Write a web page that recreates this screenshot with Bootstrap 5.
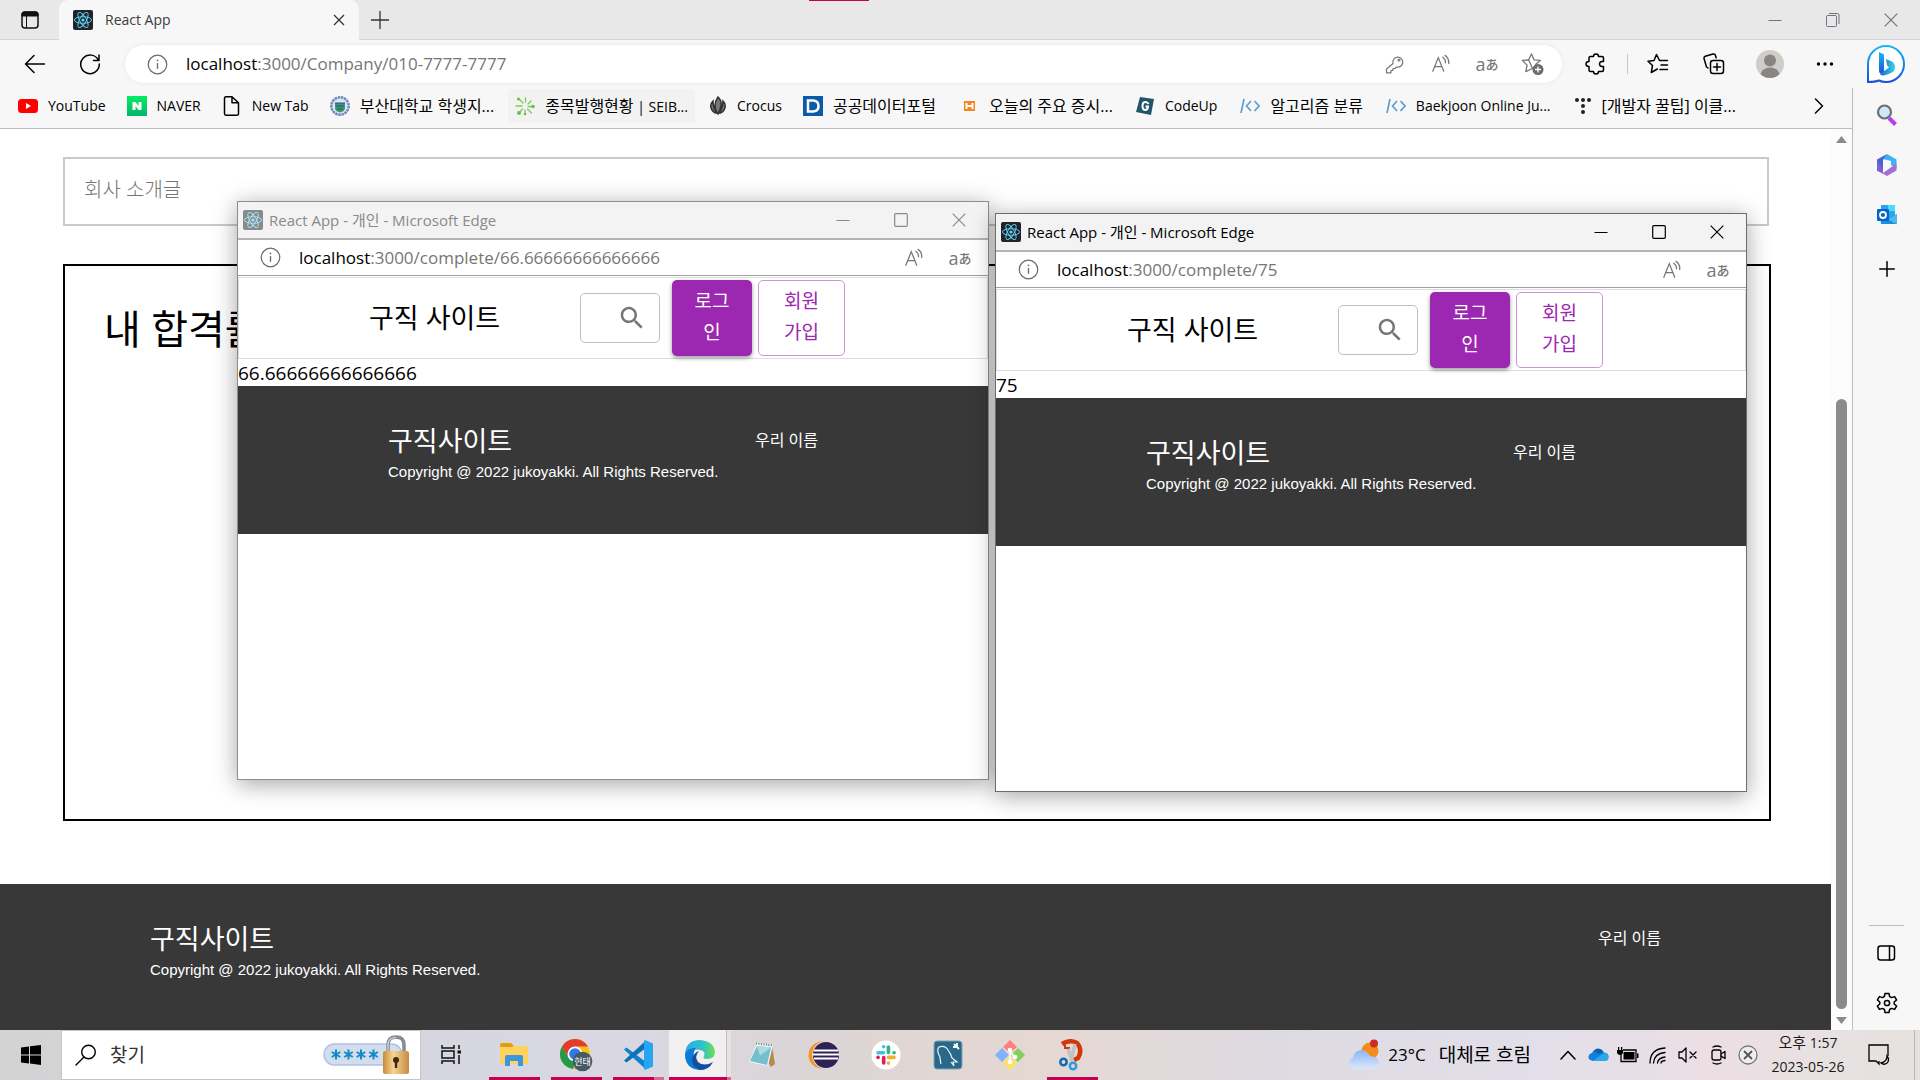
<!DOCTYPE html>
<html lang="ko">
<head>
<meta charset="utf-8">
<meta name="viewport" content="width=device-width, initial-scale=1">
<title>React App</title>
<link href="https://cdn.jsdelivr.net/npm/bootstrap@5.3.0/dist/css/bootstrap.min.css" rel="stylesheet">
<style>
:root{--ui:"Open Sans","Noto Sans CJK KR",sans-serif;--accent:#c4004f}
html,body{height:100%}
body{font-family:var(--ui);font-size:14px;line-height:20px;color:#000;overflow:hidden;background:#fff}
svg{display:block;flex:none}
button{background:none;border:0;padding:0;color:inherit}
a{color:inherit;text-decoration:none}
.line{fill:none;stroke:currentColor;stroke-width:1.5;stroke-linecap:round;stroke-linejoin:round}
.center-box{display:flex;align-items:center;justify-content:center;flex:none}
/* tab strip */
.tabstrip{height:40px;background:#e8e8e8;border-bottom:1px solid #d4d4d4}
.tabstrip .tab-menu{width:59px}
.browser-tab{width:300px;height:40px;background:#f7f7f7;border-radius:9px 9px 0 0;padding:0 12px 0 14px;margin-bottom:-1px;color:#3c3c3c}
.new-tab{width:42px}
.pink-mark{top:0;left:809px;width:60px;height:1px;background:var(--accent)}
.win-btn{width:58px;height:100%}
/* tool bar */
.toolbar{height:48px;background:#f7f7f7;padding-left:7px}
.tool{width:55px;height:38px}
.tool-end{width:56px;height:38px}
.tool-end:last-child{width:54px}
.address{height:38px;border-radius:19px;background:#fff;box-shadow:0 0 4px #e6e6e6;margin:0 6px 0 8px;padding:0 6px 0 22px;color:#767676}
.pill-btn{width:46px;height:38px}
.lang{font-size:18px;line-height:20px}
.lang i{font:500 13px/20px "Noto Sans CJK JP",sans-serif}
.url{font-size:17px;line-height:24px;color:#767676;margin-left:18px}
.url b{font-weight:400;color:#000}
.v-rule{width:1px;height:20px;background:#c8c8c8;margin:0 2px 0 3px}
.bookmarks{height:41px;background:#f7f7f7;border-bottom:1px solid #bdbdbd;padding:0 0 4px 11px}
.bookmark{height:34px;padding:0 7px;gap:10px;margin-right:7px;border-radius:3px;white-space:nowrap}
.bookmark:nth-child(n+7){margin-right:9px}
.bookmark.hovered{background:#f2f2f2}
.ko{font-size:16px}
.more-marks{width:66px}
/* side bar */
.side{width:68px;background:#f7f7f7}
.side-body{border-left:1px solid #bdbdbd;padding:2px 0}
.side-btn{width:66px;height:50px}
.side-rule{width:35px;height:1px;background:#bdbdbd;margin-bottom:2px}
/* scroll bar */
.scroller{width:21px;background:#fcfcfc;padding:6px 0 5px}
.thumb{width:11px;background:#8b8b8b;border-radius:6px}
/* page */
.page{padding-top:28px}
.intro{height:69px;margin:0 62px 38px 63px;border:2px solid #c9c9c9;padding:0 19px 4px;font-size:20px;font-weight:300;outline:0}
.intro::placeholder{color:#757575;opacity:1}
.chart-box{margin:0 60px 63px 63px;border:2px solid #000;padding:37px 39px}
.chart-box h1{font-size:40px;line-height:52px;font-weight:400}
.site-foot{height:148px;flex:none;background:#383838;color:#fff;padding:38px 170px 0 150px}
.page .site-foot{height:146px}
.site-foot h2{font-size:27px;line-height:34px;font-weight:400;margin:0}
.site-foot p{font:15px/28px "Liberation Sans",Arial,sans-serif;margin:0}
.site-foot span{font-size:16px;line-height:32px}
/* popup windows */
.popup{position:absolute;width:752px;height:579px;background:#fff;border:1px solid #6d6d6d;box-shadow:0 4px 22px rgba(0,0,0,.36)}
.popup.first{left:237px;top:201px;border-color:#8d8d8d}
.popup.second{left:995px;top:213px}
.p-title{height:38px;background:#f3f3f3;border-bottom:2px solid #b4b4b4;padding-left:5px;font-size:15px}
.p-title span{margin-left:6px}
.first .p-title{color:#8a8a8a}
.first .p-title .fav{opacity:.5}
.p-url{height:36px;border-bottom:1px solid #a0a0a0;padding:0 5px 0 22px;color:#767676}
.site-head{height:82px;margin-top:1px;border:1px solid #ddd;padding:0 142px 0 130px}
.site-head h2{font-size:27px;line-height:34px;font-weight:400;margin:0}
.find{width:80px;height:50px;border:1px solid #c0c0c0;border-radius:5px;padding-right:12px}
.find input{border:0;outline:0;background:none;width:30px;flex:1;min-width:0}
.mui{height:76px;border-radius:5px;font-size:19px;line-height:31px;padding:0 21px 3px}
.mui.solid{width:80px;background:#9c27b0;color:#fff;box-shadow:0 2px 4px rgba(0,0,0,.4);margin:0 6px 0 12px}
.mui.lined{width:87px;border:1px solid #cd93d7;color:#9c27b0;padding:0 23px 3px}
.result{font-size:19px;line-height:29px;height:27px}
/* task bar */
.taskbar{height:50px;background:linear-gradient(90deg,#d3d3d4 0,#d5d6df 22%,#d9d8e2 32%,#dbd5d6 42%,#e5d8d2 54%,#dedae1 66%,#e2dfea 80%,#ecdfe3 90%,#e4e2df 100%)}
.start{width:61px}
.search-box{width:360px;background:#fff;border:1px solid #c5c5c5;padding:0 10px 0 13px}
.search-box input{border:0;outline:0;flex:1;min-width:0;font-size:19px;margin-left:11px}
.search-box input::placeholder{color:#333;opacity:1}
.task{width:62px;height:50px;position:relative}
.task.run::after{content:"";position:absolute;left:6px;right:5px;bottom:0;height:3px;background:var(--accent)}
.task.many::after{background:linear-gradient(90deg,var(--accent) 80%,#dd6597 80%)}
.task.now{background:linear-gradient(90deg,transparent 0,#f1eff0 0 57px,#c0bebe 57px 58px,#e6e2e1 58px)}
.task.now::after{left:0;right:0;background:linear-gradient(90deg,var(--accent) 93%,#dd6597 93%)}
.tray{width:30px;height:50px}
.tray-set{margin-left:22px}
.weather{font-size:17px}
.weather .ko{font-size:19px;margin-left:13px}
.clock{width:90px;line-height:24px;text-align:center;color:#1a1a1a}
.clock .ko{font-size:15px}
.notice{width:52px}
.show-desk{width:6px;margin-left:9px;border-left:1px solid #b5b5b5}
</style>
<script src="https://cdn.jsdelivr.net/npm/bootstrap@5.3.0/dist/js/bootstrap.bundle.min.js"></script>
</head>
<body class="d-flex flex-column">
<svg width="0" height="0" class="position-absolute" aria-hidden="true">
 <symbol id="react" viewBox="0 0 20 20"><rect width="20" height="20" rx="2" fill="#20232a"/><g fill="none" stroke="#61dafb" stroke-width=".9"><ellipse cx="10" cy="10" rx="8.6" ry="3.3"/><ellipse cx="10" cy="10" rx="8.6" ry="3.3" transform="rotate(60 10 10)"/><ellipse cx="10" cy="10" rx="8.6" ry="3.3" transform="rotate(120 10 10)"/></g><circle cx="10" cy="10" r="1.6" fill="#61dafb"/></symbol>
 <symbol id="info" viewBox="0 0 22 22"><circle cx="11" cy="11" r="9.7" fill="none" stroke="#6b6b6b" stroke-width="1.3"/><path d="M11 9.5v6" stroke="#6b6b6b" stroke-width="1.4"/><circle cx="11" cy="6.7" r=".9" fill="#6b6b6b"/></symbol>
 <symbol id="read" viewBox="0 0 22 22"><g fill="none" stroke="currentColor" stroke-width="1.4" stroke-linecap="round"><path d="M2 19 8 4l6 15M4.200 14h7.600M13 3.500q3 2 3 6M15.500 1.500q4.500 3 4 9"/></g></symbol>
 <symbol id="min" viewBox="0 0 14 14"><path d="M.5 7.500h13" stroke="currentColor"/></symbol>
 <symbol id="max" viewBox="0 0 14 14"><rect x=".7" y=".7" width="12.600" height="12.600" rx="1" fill="none" stroke="currentColor" stroke-width="1.200"/></symbol>
 <symbol id="shut" viewBox="0 0 14 14"><path d="m.7.7 12.600 12.600M13.300.7.7 13.300" stroke="currentColor" stroke-width="1.200"/></symbol>
 <symbol id="find" viewBox="0 0 24 24"><path fill="#757575" d="M15.500 14h-.79l-.28-.27C15.410 12.590 16 11.110 16 9.500 16 5.910 13.090 3 9.500 3S3 5.910 3 9.500 5.910 16 9.500 16c1.610 0 3.090-.59 4.230-1.570l.27.28v.79l5 4.990L20.490 19l-4.990-5zm-6 0C7.010 14 5 11.990 5 9.500S7.010 5 9.500 5 14 7.010 14 9.500 11.990 14 9.500 14z"/></symbol>
 <symbol id="code" viewBox="0 0 20 16"><g fill="none" stroke="#5a9fd4" stroke-width="1.700"><path d="M4 1 1 15M11 3 6.500 8l4.500 5M14.500 3 19 8l-4.500 5"/></g></symbol>
</svg>

<header class="tabstrip d-flex flex-shrink-0">
 <button class="tab-menu center-box" aria-label="탭 작업 메뉴"><svg width="20" height="20"><rect x="2" y="2" width="16" height="16" rx="3" fill="none" stroke="#111" stroke-width="1.500"/><path d="M2 6V4q0-2 2-2h12q2 0 2 2v2z" fill="#111" stroke="#111"/><path d="M6.500 6v12" stroke="#111"/></svg></button>
 <div class="browser-tab d-flex align-items-center"><svg width="20" height="20"><use href="#react"/></svg><span class="ms-2 ps-1 flex-fill">React App</span><button class="center-box" aria-label="탭 닫기"><svg width="16" height="16" stroke="#333" stroke-width="1.300"><path d="m3 3 10 10M13 3 3 13"/></svg></button></div>
 <button class="new-tab center-box" aria-label="새 탭"><svg width="18" height="18" stroke="#333" stroke-width="1.300"><path d="M9 0v18M0 9h18"/></svg></button>
 <div class="ms-auto d-flex text-secondary">
  <button class="win-btn center-box" aria-label="최소화"><svg width="14" height="14"><use href="#min"/></svg></button>
  <button class="win-btn center-box" aria-label="이전 크기로"><svg width="14" height="14" fill="none" stroke="currentColor"><rect x=".5" y="2.500" width="10" height="11" rx="1"/><path d="M3 .5h8.500q1.500 0 1.500 1.500v9"/></svg></button>
  <button class="win-btn center-box" aria-label="닫기"><svg width="14" height="14"><use href="#shut"/></svg></button>
 </div>
 <div class="pink-mark position-absolute"></div>
</header>

<div class="d-flex flex-fill overflow-hidden">
 <div class="d-flex flex-column flex-fill overflow-hidden">
  <nav class="toolbar d-flex align-items-center flex-shrink-0">
   <button class="tool center-box" aria-label="뒤로"><svg class="line" width="22" height="22"><path d="M20.500 11h-19M10 2.500 1.500 11l8.500 8.500"/></svg></button>
   <button class="tool center-box" aria-label="새로 고침"><svg class="line" width="22" height="22"><path d="M19.500 7.500A9.300 9.300 0 1 0 20.300 11M20 2v5.500h-5.500"/></svg></button>
   <div class="address d-flex align-items-center flex-fill">
    <svg width="21" height="21"><use href="#info"/></svg>
    <div class="url flex-fill"><b>localhost</b>:3000/Company/010-7777-7777</div>
    <button class="pill-btn center-box" aria-label="암호"><svg class="line" width="20" height="20" style="stroke-width:1.2"><path d="M8 9.500A5 5 0 1 1 11.500 13L10 14.500H8v2H6v2.300H1.500V15z"/><circle cx="14" cy="6" r="1"/></svg></button>
    <button class="pill-btn center-box" aria-label="소리내어 읽기"><svg width="20" height="20"><use href="#read"/></svg></button>
    <button class="pill-btn center-box lang" aria-label="번역">a<i>あ</i></button>
    <button class="pill-btn center-box" aria-label="즐겨찾기 추가"><svg width="24" height="24"><path d="M10.500 2 13 7.800l6.300.6-4.700 4.200M11.500 16.500 4.800 19.600l1.300-6.500L1.300 8.400l6.300-.6z" class="line" style="stroke-width:1.3"/><path d="m10.500 2-2.900 5.800" class="line" style="stroke-width:1.3"/><circle cx="17" cy="17.500" r="5.500" fill="#6b6b6b"/><path d="M17 14.500v6M14 17.500h6" stroke="#fff" stroke-width="1.300"/></svg></button>
   </div>
   <button class="tool-end center-box" aria-label="확장"><svg class="line" width="22" height="22"><path d="M5.500 3.500h3Q8.500 1 11 1t2.500 2.500H17q1.500 0 1.500 1.500v3.500h-1.500q-2.500.3-2.500 2.500t2.500 2.500h1.500V17q0 1.500-1.500 1.500h-3.500Q13.500 21 11 21t-2.500-2.500H5.500q-1.500 0-1.500-1.500v-3.500Q1 13.500 1 11t3-2.500V5q0-1.500 1.500-1.500z"/></svg></button>
   <div class="v-rule"></div>
   <button class="tool-end center-box" aria-label="즐겨찾기"><svg class="line" width="22" height="22"><path d="M12.500 7.500 9.500 1.500 7 7.500l-6 .8 4.500 4.200L4.300 19.500l6-3.500M12.500 7.500h8M14 12h6.500M13 16.500h7.500"/></svg></button>
   <button class="tool-end center-box" aria-label="컬렉션"><svg class="line" width="22" height="22"><rect x="7.500" y="7.500" width="13" height="13" rx="2.500"/><path d="M14 10.500v7M10.500 14h7M5 15 3.500 14 1 5.500Q.8 4 2.300 3.300L10 1q2-.4 2.500 1.500l.6 2.300"/></svg></button>
   <button class="tool-end center-box" aria-label="프로필"><svg width="28" height="28"><circle cx="14" cy="14" r="14" fill="#d0cdc9"/><circle cx="14" cy="10.500" r="6" fill="#8a8583"/><path d="M4.500 24q2-6.500 9.500-6.500T23.500 24Q20 28 14 28t-9.500-4z" fill="#8a8583"/></svg></button>
   <button class="tool-end center-box" aria-label="설정 및 기타"><svg width="18" height="4"><circle cx="2.500" cy="2" r="1.700"/><circle cx="9" cy="2" r="1.700"/><circle cx="15.500" cy="2" r="1.700"/></svg></button>
  </nav>

  <nav class="bookmarks d-flex align-items-center flex-shrink-0">
   <a href="#" class="bookmark d-flex align-items-center"><svg width="20" height="20"><rect y="3" width="20" height="14" rx="3.500" fill="#f00"/><path d="m8 7 5 3-5 3z" fill="#fff"/></svg><span>YouTube</span></a>
   <a href="#" class="bookmark d-flex align-items-center"><svg width="20" height="20"><defs><linearGradient id="nv" x2="0" y2="1"><stop stop-color="#04ec64"/><stop offset="1" stop-color="#06b56c"/></linearGradient></defs><rect width="20" height="20" fill="url(#nv)"/><path d="M5.500 14V6h3l3 4V6h3v8h-3l-3-4v4z" fill="#fff"/></svg><span>NAVER</span></a>
   <a href="#" class="bookmark d-flex align-items-center"><svg class="line" width="20" height="20"><path d="M2.500 2.500q0-1.700 1.500-1.700h6l6.500 6V17.500q0 1.700-1.500 1.700H4q-1.500 0-1.500-1.700zM10 1v5.800h6.200"/></svg><span>New Tab</span></a>
   <a href="#" class="bookmark d-flex align-items-center"><svg width="20" height="20"><circle cx="10" cy="10" r="8.700" fill="#dfe5f3" stroke="#6f84c0" stroke-width="2.500" stroke-dasharray="2.500 .7"/><path d="M5 7h10v5q0 3.500-5 4.500-5-1-5-4.500z" fill="#3c9a64"/><path d="M5 7h10M6 10h8M7 13h6" stroke="#244b9b"/></svg><span class="ko">부산대학교 학생지...</span></a>
   <a href="#" class="bookmark hovered d-flex align-items-center"><svg width="20" height="20"><g stroke="#7ccb5e" stroke-width="1.300" stroke-linecap="round"><path d="M7 10H1M8 7 4 3M10.500 6V2M13 8l3-3M13 10.500h5M7.500 13 4 17M10 14v4M12.500 13l4 4"/></g><g fill="#66c24a"><circle cx="3.500" cy="3" r="1.600"/><circle cx="18" cy="10.500" r="1.800"/><circle cx="4" cy="17" r="2"/><circle cx="10" cy="18" r="1.300"/></g></svg><span><span class="ko">종목발행현황</span> | SEIB...</span></a>
   <a href="#" class="bookmark d-flex align-items-center"><svg width="18" height="20"><path d="M9 1q4 4 3 9t-3 8q-3-3-3-8t3-9zM4 5q-4 4-1 9 2 3 5 3-4-5-4-12zM14 5q4 4 1 9-2 3-5 3 4-5 4-12z" fill="#777" stroke="#333" stroke-width="1.500"/></svg><span>Crocus</span></a>
   <a href="#" class="bookmark d-flex align-items-center"><svg width="20" height="20"><rect width="20" height="20" fill="#0a5ba8"/><path d="M5 4.500h5.500q5 .5 5 5.500t-5 5.500H5z" fill="none" stroke="#fff" stroke-width="2.500"/></svg><span class="ko">공공데이터포털</span></a>
   <a href="#" class="bookmark d-flex align-items-center"><svg width="20" height="20"><rect x="5" y="5" width="11" height="10" fill="#f5831f"/><path d="M7.500 13V7M13.500 13V7M7.500 10h6" fill="none" stroke="#fff" stroke-width="2"/></svg><span class="ko">오늘의 주요 증시...</span></a>
   <a href="#" class="bookmark d-flex align-items-center"><svg width="19" height="20"><path d="M4 1 18 3 15 19 0 16z" fill="#245468"/><path d="M12.500 8q-1-2-3-2-3 0-3 4t3 4q2 0 2.500-3.500H9.500" fill="none" stroke="#fff" stroke-width="2"/></svg><span>CodeUp</span></a>
   <a href="#" class="bookmark d-flex align-items-center"><svg width="20" height="16"><use href="#code"/></svg><span class="ko">알고리즘 분류</span></a>
   <a href="#" class="bookmark d-flex align-items-center"><svg width="20" height="16"><use href="#code"/></svg><span>Baekjoon Online Ju...</span></a>
   <a href="#" class="bookmark d-flex align-items-center"><svg width="18" height="20" fill="#222"><circle cx="3" cy="4" r="2"/><circle cx="9" cy="4" r="2"/><circle cx="15" cy="4" r="2"/><circle cx="9" cy="10" r="2"/><circle cx="9" cy="16" r="2"/></svg><span class="ko">[개발자 꿀팁] 이클...</span></a>
   <button class="more-marks center-box ms-auto" aria-label="더 보기"><svg class="line" width="10" height="16"><path d="m1.500 1 7 7-7 7"/></svg></button>
  </nav>

  <div class="d-flex flex-fill overflow-hidden">
   <main class="page d-flex flex-column flex-fill overflow-hidden">
    <input class="intro flex-shrink-0" type="text" placeholder="회사 소개글" aria-label="회사 소개글">
    <section class="chart-box flex-fill"><h1>내 합격률</h1></section>
    <footer class="site-foot d-flex justify-content-between"><div><h2>구직사이트</h2><p>Copyright @ 2022 jukoyakki. All Rights Reserved.</p></div><span>우리 이름</span></footer>
   </main>
   <div class="scroller d-flex flex-column align-items-center" aria-hidden="true">
    <svg width="11" height="10" fill="#8b8b8b"><path d="M5.500 1 11 8H0z"/></svg>
    <div style="flex:254"></div><div class="thumb" style="flex:609"></div><div style="height:6px"></div>
    <svg width="11" height="10" fill="#8b8b8b"><path d="M0 2h11L5.500 9z"/></svg>
   </div>
  </div>
 </div>

 <aside class="side d-flex flex-column flex-shrink-0">
  <button class="toolbar center-box ps-0" aria-label="Bing"><svg width="40" height="40"><defs><linearGradient id="bg1" x2="0" y2="1"><stop stop-color="#1cb6f0"/><stop offset="1" stop-color="#1b52d8"/></linearGradient><linearGradient id="bg2" x2="1"><stop stop-color="#1d63dd"/><stop offset="1" stop-color="#37d6e0"/></linearGradient></defs><path d="M2 38V20A18 18 0 1 1 20 38q-4 0-7-1.500-4 1.500-11 1.500z" fill="#fff" stroke="url(#bg1)" stroke-width="2"/><path d="m13 8 5 2.500v17l-2.500 2.500q-2.500-.5-2.500-3z" fill="url(#bg1)"/><path d="m20 15 6 2.500q3.500 2 3 6.500-.5 4-5 5.500l-6 2q-3 .5-4-1.500l9-6.500-2-2z" fill="url(#bg2)"/></svg></button>
  <div class="side-body d-flex flex-column align-items-center flex-fill">
   <button class="side-btn center-box" aria-label="검색"><svg width="22" height="22"><path d="m13 14 6.500 6.500" stroke="#b83df0" stroke-width="4"/><circle cx="8.500" cy="8" r="6.500" fill="#cfe8f7" stroke="#6b6e75" stroke-width="2.200"/></svg></button>
   <button class="side-btn center-box" aria-label="Microsoft 365"><svg width="22" height="22"><path d="M11 0 20.500 5.500v9L15 11V7L7 5z" fill="#3fb3ee"/><path d="M11 0 1 5.500v11l6 2.500V6z" fill="#4a63d2"/><path d="M1 16.500 11 22l9.500-5.500v-7L14 14l-7 5z" fill="#a56fd4"/><path d="M1 7v9.500l6 3V15z" fill="#7f5fd6"/><circle cx="11" cy="11" r="3.700" fill="#f7f7f7"/></svg></button>
   <button class="side-btn center-box" aria-label="Outlook"><svg width="22" height="22"><path d="M5 1h14v13H5z" fill="#28a8ea"/><path d="M12 1h7v6h-7z" fill="#50d9ff"/><path d="m4 10 8 5 9-5v10H5z" fill="#1490df"/><path d="m21 10-9 5.500 9 5z" fill="#50b7ee"/><rect x="1" y="5" width="12" height="12" rx="1" fill="#0a63c9"/><circle cx="7" cy="11" r="3" fill="none" stroke="#fff" stroke-width="1.800"/></svg></button>
   <button class="side-btn center-box mt-1" aria-label="추가"><svg class="line" width="16" height="16"><path d="M8 .7v14.600M.7 8h14.600"/></svg></button>
   <div class="side-rule mt-auto"></div>
   <button class="side-btn center-box" aria-label="사이드바 숨기기"><svg class="line" width="19" height="18"><rect x="1" y="2" width="16.500" height="14" rx="2.500"/><path d="M12.500 2v14"/></svg></button>
   <button class="side-btn center-box" aria-label="설정"><svg class="line" width="22" height="22" viewBox="0 0 22 22"><path d="m9 1.500 4 0 .6 3 2 1.100 3-1 2 3.400-2.400 2v2l2.400 2-2 3.400-3-1-2 1.100-.6 3H9l-.6-3-2-1.100-3 1L1.400 14l2.400-2v-2L1.400 8l2-3.400 3 1 2-1.100z"/><circle cx="11" cy="11" r="2.600"/></svg></button>
  </div>
 </aside>
</div>

<section class="popup first">
 <div class="p-title d-flex align-items-center"><svg class="fav" width="20" height="20"><use href="#react"/></svg><span class="flex-fill">React App - 개인 - Microsoft Edge</span><button class="win-btn center-box" aria-label="최소화"><svg width="14" height="14"><use href="#min"/></svg></button><button class="win-btn center-box" aria-label="최대화"><svg width="14" height="14"><use href="#max"/></svg></button><button class="win-btn center-box" aria-label="닫기"><svg width="14" height="14"><use href="#shut"/></svg></button></div>
 <div class="p-url d-flex align-items-center"><svg width="21" height="21"><use href="#info"/></svg><div class="url flex-fill"><b>localhost</b>:3000/complete/66.66666666666666</div><button class="pill-btn center-box" aria-label="소리내어 읽기"><svg width="20" height="20"><use href="#read"/></svg></button><button class="pill-btn center-box lang" aria-label="번역">a<i>あ</i></button></div>
 <div class="site-head d-flex align-items-center"><h2 class="me-auto">구직 사이트</h2><label class="find d-flex align-items-center"><input type="text" aria-label="검색"><svg width="30" height="30"><use href="#find"/></svg></label><button class="mui solid">로그인</button><button class="mui lined">회원가입</button></div>
 <div class="result">66.66666666666666</div>
 <footer class="site-foot d-flex justify-content-between"><div><h2>구직사이트</h2><p>Copyright @ 2022 jukoyakki. All Rights Reserved.</p></div><span>우리 이름</span></footer>
</section>

<section class="popup second">
 <div class="p-title d-flex align-items-center"><svg class="fav" width="20" height="20"><use href="#react"/></svg><span class="flex-fill">React App - 개인 - Microsoft Edge</span><button class="win-btn center-box" aria-label="최소화"><svg width="14" height="14"><use href="#min"/></svg></button><button class="win-btn center-box" aria-label="최대화"><svg width="14" height="14"><use href="#max"/></svg></button><button class="win-btn center-box" aria-label="닫기"><svg width="14" height="14"><use href="#shut"/></svg></button></div>
 <div class="p-url d-flex align-items-center"><svg width="21" height="21"><use href="#info"/></svg><div class="url flex-fill"><b>localhost</b>:3000/complete/75</div><button class="pill-btn center-box" aria-label="소리내어 읽기"><svg width="20" height="20"><use href="#read"/></svg></button><button class="pill-btn center-box lang" aria-label="번역">a<i>あ</i></button></div>
 <div class="site-head d-flex align-items-center"><h2 class="me-auto">구직 사이트</h2><label class="find d-flex align-items-center"><input type="text" aria-label="검색"><svg width="30" height="30"><use href="#find"/></svg></label><button class="mui solid">로그인</button><button class="mui lined">회원가입</button></div>
 <div class="result">75</div>
 <footer class="site-foot d-flex justify-content-between"><div><h2>구직사이트</h2><p>Copyright @ 2022 jukoyakki. All Rights Reserved.</p></div><span>우리 이름</span></footer>
</section>

<footer class="taskbar d-flex flex-shrink-0">
 <button class="start center-box" aria-label="시작"><svg width="20" height="20"><path d="M0 2.500 8 1.500v8H0zM9 1.300 20 0v9.500H9zM0 10.500h8v8l-8-1zM9 10.500h11V20L9 18.600z"/></svg></button>
 <label class="search-box d-flex align-items-center"><svg class="line" width="22" height="22" style="stroke-width:1.4"><circle cx="13.500" cy="8" r="6.800"/><path d="M9 13 1 21"/></svg><input type="text" placeholder="찾기" aria-label="찾기">
  <svg width="88" height="48"><defs><linearGradient id="gold"><stop stop-color="#c98a3c"/><stop offset=".4" stop-color="#f7d590"/><stop offset="1" stop-color="#c58b45"/></linearGradient></defs><rect x="2" y="13" width="78" height="21" rx="10.500" fill="#d3deed" stroke="#b3c0ec" stroke-width="1.500"/><g stroke="#128ac8" stroke-width="2"><path id="ast" d="M14 18.500v10M9.700 21l8.600 5M18.300 21l-8.600 5"/><use href="#ast" x="12.500"/><use href="#ast" x="25"/><use href="#ast" x="37.500"/></g><path d="M66 22V14q0-8 8-8t8 8v8" fill="none" stroke="#858b92" stroke-width="3.500"/><path d="M66 21V14q0-7.500 8-7.500" fill="none" stroke="#d9dde0" stroke-width="1.200"/><rect x="61" y="20" width="26" height="23" rx="2" fill="url(#gold)"/><circle cx="74" cy="29" r="3" fill="#432811"/><path d="M72.800 29h2.400v8h-2.400z" fill="#432811"/></svg></label>
 <button class="task center-box" aria-label="작업 보기"><svg width="22" height="22" fill="none" stroke="#111" stroke-width="1.500"><path d="M1 1v3h12V1M1 20v-3h12v3"/><rect x="1" y="7" width="12" height="7"/><path d="M18 1v4M18 11v9"/><path d="M16.500 8h3.500" stroke-width="3"/></svg></button>
 <button class="task run center-box" aria-label="파일 탐색기"><svg width="28" height="26"><path d="M0 3q0-2 2-2h9l3 3h14v6H0z" fill="#dfa00d"/><path d="M0 5h12l2-1h14v18H0z" fill="#ffd25e"/><path d="M5 24v-9q0-2 2-2h14q2 0 2 2v9h-5v-5h-8v5z" fill="#3b96dc"/></svg></button>
 <button class="task run center-box" aria-label="Chrome"><svg width="34" height="34"><circle cx="16" cy="16" r="15" fill="#fbc116"/><path d="M3 8.500A15 15 0 0 1 29 8.500H16L9.500 20z" fill="#e33b2e"/><path d="M3 8.500 9.500 20l6.500 3.500L14 31A15 15 0 0 1 3 8.500z" fill="#229a4a"/><circle cx="16" cy="16" r="7.500" fill="#fff"/><circle cx="16" cy="16" r="5.800" fill="#2f79ee"/><circle cx="23.500" cy="23.500" r="9.800" fill="#455a64"/><text x="23.500" y="27" text-anchor="middle" font-size="9" font-family="Noto Sans CJK KR" fill="#fff">현태</text></svg></button>
 <button class="task run many center-box" aria-label="Visual Studio Code"><svg width="30" height="30"><path d="M1 9.500 3.500 7.500 23 22v7.500z" fill="#0c83cb"/><path d="M1 20.500 3.500 22.500 23 8V.5z" fill="#0b72b8"/><path d="M22 0 30 3.500v23L22 30q-1-.5-1-2V2q0-1.500 1-2z" fill="#27a4f2"/></svg></button>
 <button class="task run now center-box" aria-label="Edge"><svg width="30" height="30"><defs><linearGradient id="eg"><stop stop-color="#2ba9e5"/><stop offset=".6" stop-color="#31c3c9"/><stop offset="1" stop-color="#6fe04e"/></linearGradient></defs><path d="M0 14Q1 0 15 0q14 1 15 12 0 7-8 7-5 0-3-3 2-5-4-6Q7 8 0 14z" fill="url(#eg)"/><path d="M0 14Q3 7 11 8q-4 5-1 12 4 7 14 6-4 4-9 4Q0 29 0 14z" fill="#0d7bd3"/><path d="M14 11q-5 6-1 11 6 5 15 0-4 8-13 8-8-3-8-10 1-7 7-9z" fill="#124f9e"/></svg></button>
 <button class="task center-box" aria-label="메모장"><svg width="28" height="28"><path d="m9 3 15 2 3 18-4 3z" fill="#b48a4d"/><path d="M9 2 25 4 20 25 1 21z" fill="#eaf5f6"/><path d="M9 5 23 6.500 19 24 2 20z" fill="#75bfcc"/><path d="m9 5 14 1.500-11 8z" fill="#a9dde3"/><path d="M8 2.500 25 4.500" stroke="#777" stroke-width="2" stroke-dasharray="1 1.500"/></svg></button>
 <button class="task center-box" aria-label="Eclipse"><svg width="32" height="30"><circle cx="14" cy="15" r="13.500" fill="#f7941e"/><circle cx="18" cy="15" r="14" fill="#e5d8d2"/><circle cx="18" cy="15" r="13" fill="#2c2255"/><path d="M6 10.500h24M5 14.500h26M6 18.500h24" stroke="#fff" stroke-width="1.800"/></svg></button>
 <button class="task center-box" aria-label="Slack"><svg width="30" height="30"><circle cx="15" cy="15" r="14.500" fill="#fff"/><g stroke-width="3.600" stroke-linecap="round"><path d="M12.700 6.700v.1M7 12.700h5.500" stroke="#36c5f0"/><path d="M17.400 7v5.500M23 12.700h.1" stroke="#2eb67d"/><path d="M17.500 17.400H23M17.400 23v.1" stroke="#ecb22e"/><path d="M12.700 17.500V23M7 17.400h.1" stroke="#e01e5a"/></g></svg></button>
 <button class="task center-box" aria-label="MySQL Workbench"><svg width="30" height="30"><rect x="1" y="1" width="28" height="28" rx="3" fill="#2a688a" stroke="#7aa4bb"/><path d="M8 24Q7 20 7 17 3 10 6 7q6-2 9 3 3 4 4 8l5 4-4 0 1 4-3-4" fill="none" stroke="#e9f4f9" stroke-width="1.200"/><path d="m21 4 5 5M24 3v4h-4" stroke="#fff" stroke-width="1.800" fill="none"/></svg></button>
 <button class="task center-box" aria-label="Git"><svg width="32" height="32"><path d="M16 1l7 7-7 6-7-6z" fill="#ff7f7f"/><path d="m8 9 7 7-7 7-7-7z" fill="#80b3ff"/><path d="m24 9 7 7-7 7-7-7z" fill="#80d15c"/><path d="m16 17 7 7-7 7-7-7z" fill="#ffe066"/><path d="M16 10v13M16 13l5 5" stroke="#f6f1ee" stroke-width="2.200"/><circle cx="16" cy="23" r="2.300" fill="#fff"/><circle cx="21" cy="18" r="2.300" fill="#fff"/><circle cx="16" cy="11" r="2.300" fill="#fff"/></svg></button>
 <button class="task run center-box" aria-label="캡처 도구"><svg width="30" height="32"><path d="M5 5Q13 0 20 4q6 7 1 15l-4 2" fill="none" stroke="#d2370c" stroke-width="4.500"/><path d="M8 6v3h5" fill="none" stroke="#d2370c" stroke-width="2"/><path d="m18 5-4 17M11 10l4 12" stroke="#bfc3c6" stroke-width="3.500"/><circle cx="6.500" cy="23" r="3.200" fill="none" stroke="#1368b3" stroke-width="2.500"/><circle cx="16" cy="27" r="3.200" fill="none" stroke="#2b9be5" stroke-width="2.500"/></svg></button>

 <button class="weather d-flex align-items-center ms-auto"><svg width="32" height="32"><defs><linearGradient id="cl" x2="0" y2="1"><stop stop-color="#8db4f3"/><stop offset="1" stop-color="#d9e8fa"/></linearGradient></defs><circle cx="22" cy="12" r="8.500" fill="#f48c1b"/><circle cx="26" cy="4.500" r="4" fill="#cf2b20"/><path d="M7 30q-6-1-6-6 0-4 4-5 1-7 8-8 6 0 9 6 8 0 9 7 0 5-5 6z" fill="url(#cl)"/></svg><span class="ms-2">23°C</span><span class="ko">대체로 흐림</span></button>
 <div class="tray-set d-flex">
  <button class="tray center-box" aria-label="숨겨진 아이콘"><svg class="line" width="16" height="10"><path d="m1 9 7-7.500L15 9"/></svg></button>
  <button class="tray center-box" aria-label="OneDrive"><svg width="21" height="14"><path d="M5 13Q0 12 .5 8.500 1 5.500 4 5 6 .5 10.500.5q4 .5 5.500 4 5 .5 4.500 5-.5 3.500-4 3.500z" fill="#1282d8"/><path d="M4.500 13 16 5q5 .5 4.500 4.500-.5 3.500-4 3.500z" fill="#2aa9ec"/><path d="M6 3Q11-2 15 4l-4 2z" fill="#0c5eb0"/></svg></button>
  <button class="tray center-box" aria-label="배터리"><svg width="22" height="16"><path d="M4 4v10.500h15V3H6" fill="none" stroke="#000" stroke-width="1.300"/><path d="M6.500 5h11v7.500h-11zM20 6.500h1.500V11H20zM0 3h6v3q-1 2-3 2T0 6zM1 0h1.300v3H1zM4 0h1.300v3H4z"/></svg></button>
  <button class="tray center-box" aria-label="네트워크"><svg width="18" height="18" class="line" style="stroke-width:1.3"><path d="M1 17Q1 3 16 2M4.500 17Q5 7.500 16 6.500M8.500 17q.5-5 7.500-6M12 17q0-2 4-2.500"/></svg></button>
  <button class="tray center-box" aria-label="음소거"><svg width="20" height="18" class="line" style="stroke-width:1.3"><path d="M1 6v6h3l4 4V2L4 6zM12 6l6 6M18 6l-6 6"/></svg></button>
  <button class="tray center-box" aria-label="모임"><svg width="18" height="20" class="line" style="stroke-width:1.3"><rect x="3" y="5" width="9" height="10" rx="2"/><path d="m12 9 4-2.500v7L12 11M4 2q4-2 8 0M4 18q4 2 8 0"/></svg></button>
  <button class="tray center-box" aria-label="상태"><svg width="20" height="20" fill="none" stroke="#777" stroke-width="1.300"><circle cx="10" cy="10" r="9" fill="#eee"/><path d="m6 6 8 8M14 6l-8 8" stroke="#555" stroke-width="1.800"/></svg></button>
 </div>
 <div class="clock"><div><span class="ko">오후</span> 1:57</div><div>2023-05-26</div></div>
 <button class="notice center-box" aria-label="알림"><svg width="22" height="22" fill="none" stroke="#000" stroke-width="1.300"><path d="M20 12V1H1v16h7l3 3v-3"/><path d="M19 12q0 6-6 7 3 2.500 6 0 3-3 0-7z" fill="#fff"/></svg></button>
 <div class="show-desk"></div>
</footer>
</body>
</html>
